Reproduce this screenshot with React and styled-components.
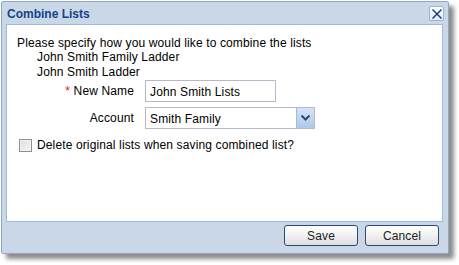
import React, { useState } from "react";
import styled, { createGlobalStyle } from "styled-components";

const GlobalStyle = createGlobalStyle`
  html, body {
    margin: 0;
    padding: 0;
    background: #ffffff;
  }
  body {
    font-family: "Liberation Sans", Arial, sans-serif;
    font-size: 12px;
    letter-spacing: 0.13px;
    color: #000;
  }
`;

function App() {
  const [name, setName] = useState("John Smith Lists");
  const [deleteLists, setDeleteLists] = useState(false);

  return (
    <Page>
      <GlobalStyle />
      <Window>
        <Header>
          <Title>Combine Lists</Title>
          <CloseButton aria-label="Close">
            <svg width="10" height="10" viewBox="0 0 10 10">
              <path
                d="M1 1 L9 9 M9 1 L1 9"
                stroke="#15428b"
                strokeWidth="1.5"
                strokeLinecap="square"
              />
            </svg>
          </CloseButton>
        </Header>

        <Body>
          <Intro>Please specify how you would like to combine the lists</Intro>
          <ListName>John Smith Family Ladder</ListName>
          <ListName>John Smith Ladder</ListName>

          <Form>
            <Label>
              <Required>*</Required> New Name
            </Label>
            <TextInput value={name} onChange={(e) => setName(e.target.value)} />

            <Label>Account</Label>
            <Combo>
              <ComboText>Smith Family</ComboText>
              <ComboTrigger>
                <svg width="9" height="6" viewBox="0 0 9 6">
                  <path d="M0.5 0.5 L4.5 4.5 L8.5 0.5" stroke="#2d4a73" strokeWidth="2" fill="none" />
                </svg>
              </ComboTrigger>
            </Combo>
          </Form>

          <CheckRow onClick={() => setDeleteLists(!deleteLists)}>
            <CheckBox checked={deleteLists} />
            <span>Delete original lists when saving combined list?</span>
          </CheckRow>
        </Body>

        <Footer>
          <Button>Save</Button>
          <Button>Cancel</Button>
        </Footer>
      </Window>
    </Page>
  );
}

export default App;

const Page = styled.div`
  width: 459px;
  height: 265px;
  padding: 1px 0 0 1px;
  box-sizing: border-box;
`;

const Window = styled.div`
  width: 448px;
  height: 253px;
  box-sizing: border-box;
  border: 1px solid #8ea8cb;
  border-radius: 2px;
  background: #cad7e7;
  box-shadow: 5px 5px 4px rgba(0, 0, 0, 0.45);
  display: flex;
  flex-direction: column;
`;

const Header = styled.div`
  height: 22px;
  display: flex;
  align-items: center;
  justify-content: space-between;
  padding: 0 4px 0 5px;
`;

const Title = styled.div`
  font-weight: bold;
  font-size: 12px;
  letter-spacing: 0;
  color: #15428b;
  padding-top: 1px;
`;

const CloseButton = styled.div`
  width: 13px;
  height: 13px;
  border: 1px solid #99b4d8;
  border-radius: 2px;
  background: linear-gradient(#ffffff, #e4ecf7);
  display: flex;
  align-items: center;
  justify-content: center;
  margin-top: 1px;
`;

const Body = styled.div`
  margin: 0 5px 0 4px;
  height: 198px;
  box-sizing: border-box;
  border: 1px solid #99bbe8;
  background: #ffffff;
  padding: 11px 10px 0 10px;
`;

const Intro = styled.div`
  line-height: 14px;
`;

const ListName = styled.div`
  line-height: 14.5px;
  padding-left: 20px;
`;

const Form = styled.div`
  display: grid;
  grid-template-columns: 117px auto;
  column-gap: 11px;
  row-gap: 5px;
  align-items: center;
  justify-items: start;
  margin-top: 1px;
`;

const Label = styled.div`
  justify-self: end;
  line-height: 14px;
`;

const Required = styled.span`
  color: #e0141a;
`;

const TextInput = styled.input`
  width: 131px;
  height: 22px;
  box-sizing: border-box;
  border: 1px solid #b5b8c8;
  padding: 1px 4px 0;
  font-family: "Liberation Sans", Arial, sans-serif;
  font-size: 12px;
  letter-spacing: 0.13px;
  color: #000;
  outline: none;
  background: #fff;
`;

const Combo = styled.div`
  width: 170px;
  height: 22px;
  box-sizing: border-box;
  border: 1px solid #b5b8c8;
  display: flex;
  background: #fff;
`;

const ComboText = styled.div`
  flex: 1;
  padding: 0 4px;
  display: flex;
  align-items: center;
  padding-top: 1px;
`;

const ComboTrigger = styled.div`
  width: 17px;
  border-left: 1px solid #9fbde3;
  background: linear-gradient(#d6e4f5, #aec8ea);
  display: flex;
  align-items: center;
  justify-content: center;
`;

const CheckRow = styled.label`
  display: flex;
  align-items: center;
  gap: 5px;
  margin-top: 9px;
  padding-left: 2px;
  cursor: pointer;
`;

const CheckBox = styled.span`
  width: 13px;
  height: 13px;
  box-sizing: border-box;
  border: 1px solid #8e8f8f;
  background: ${(props) =>
    props.checked
      ? "linear-gradient(135deg, #5a8dd0, #2d5ea8)"
      : "linear-gradient(135deg, #dcdcdc, #f8f8f8)"};
  box-shadow: inset 0 0 0 1px #f3f3f3;
`;

const Footer = styled.div`
  flex: 1;
  display: flex;
  justify-content: flex-end;
  gap: 7px;
  padding: 3px 9px 0 0;
`;

const Button = styled.button`
  width: 74px;
  height: 21px;
  box-sizing: border-box;
  border: 1px solid #274a7d;
  border-radius: 3px;
  background: linear-gradient(#ffffff 0%, #f3f3f3 45%, #dddddd 100%);
  font-family: "Liberation Sans", Arial, sans-serif;
  font-size: 12px;
  letter-spacing: 0.13px;
  color: #222;
  padding: 0;
  cursor: pointer;
`;
